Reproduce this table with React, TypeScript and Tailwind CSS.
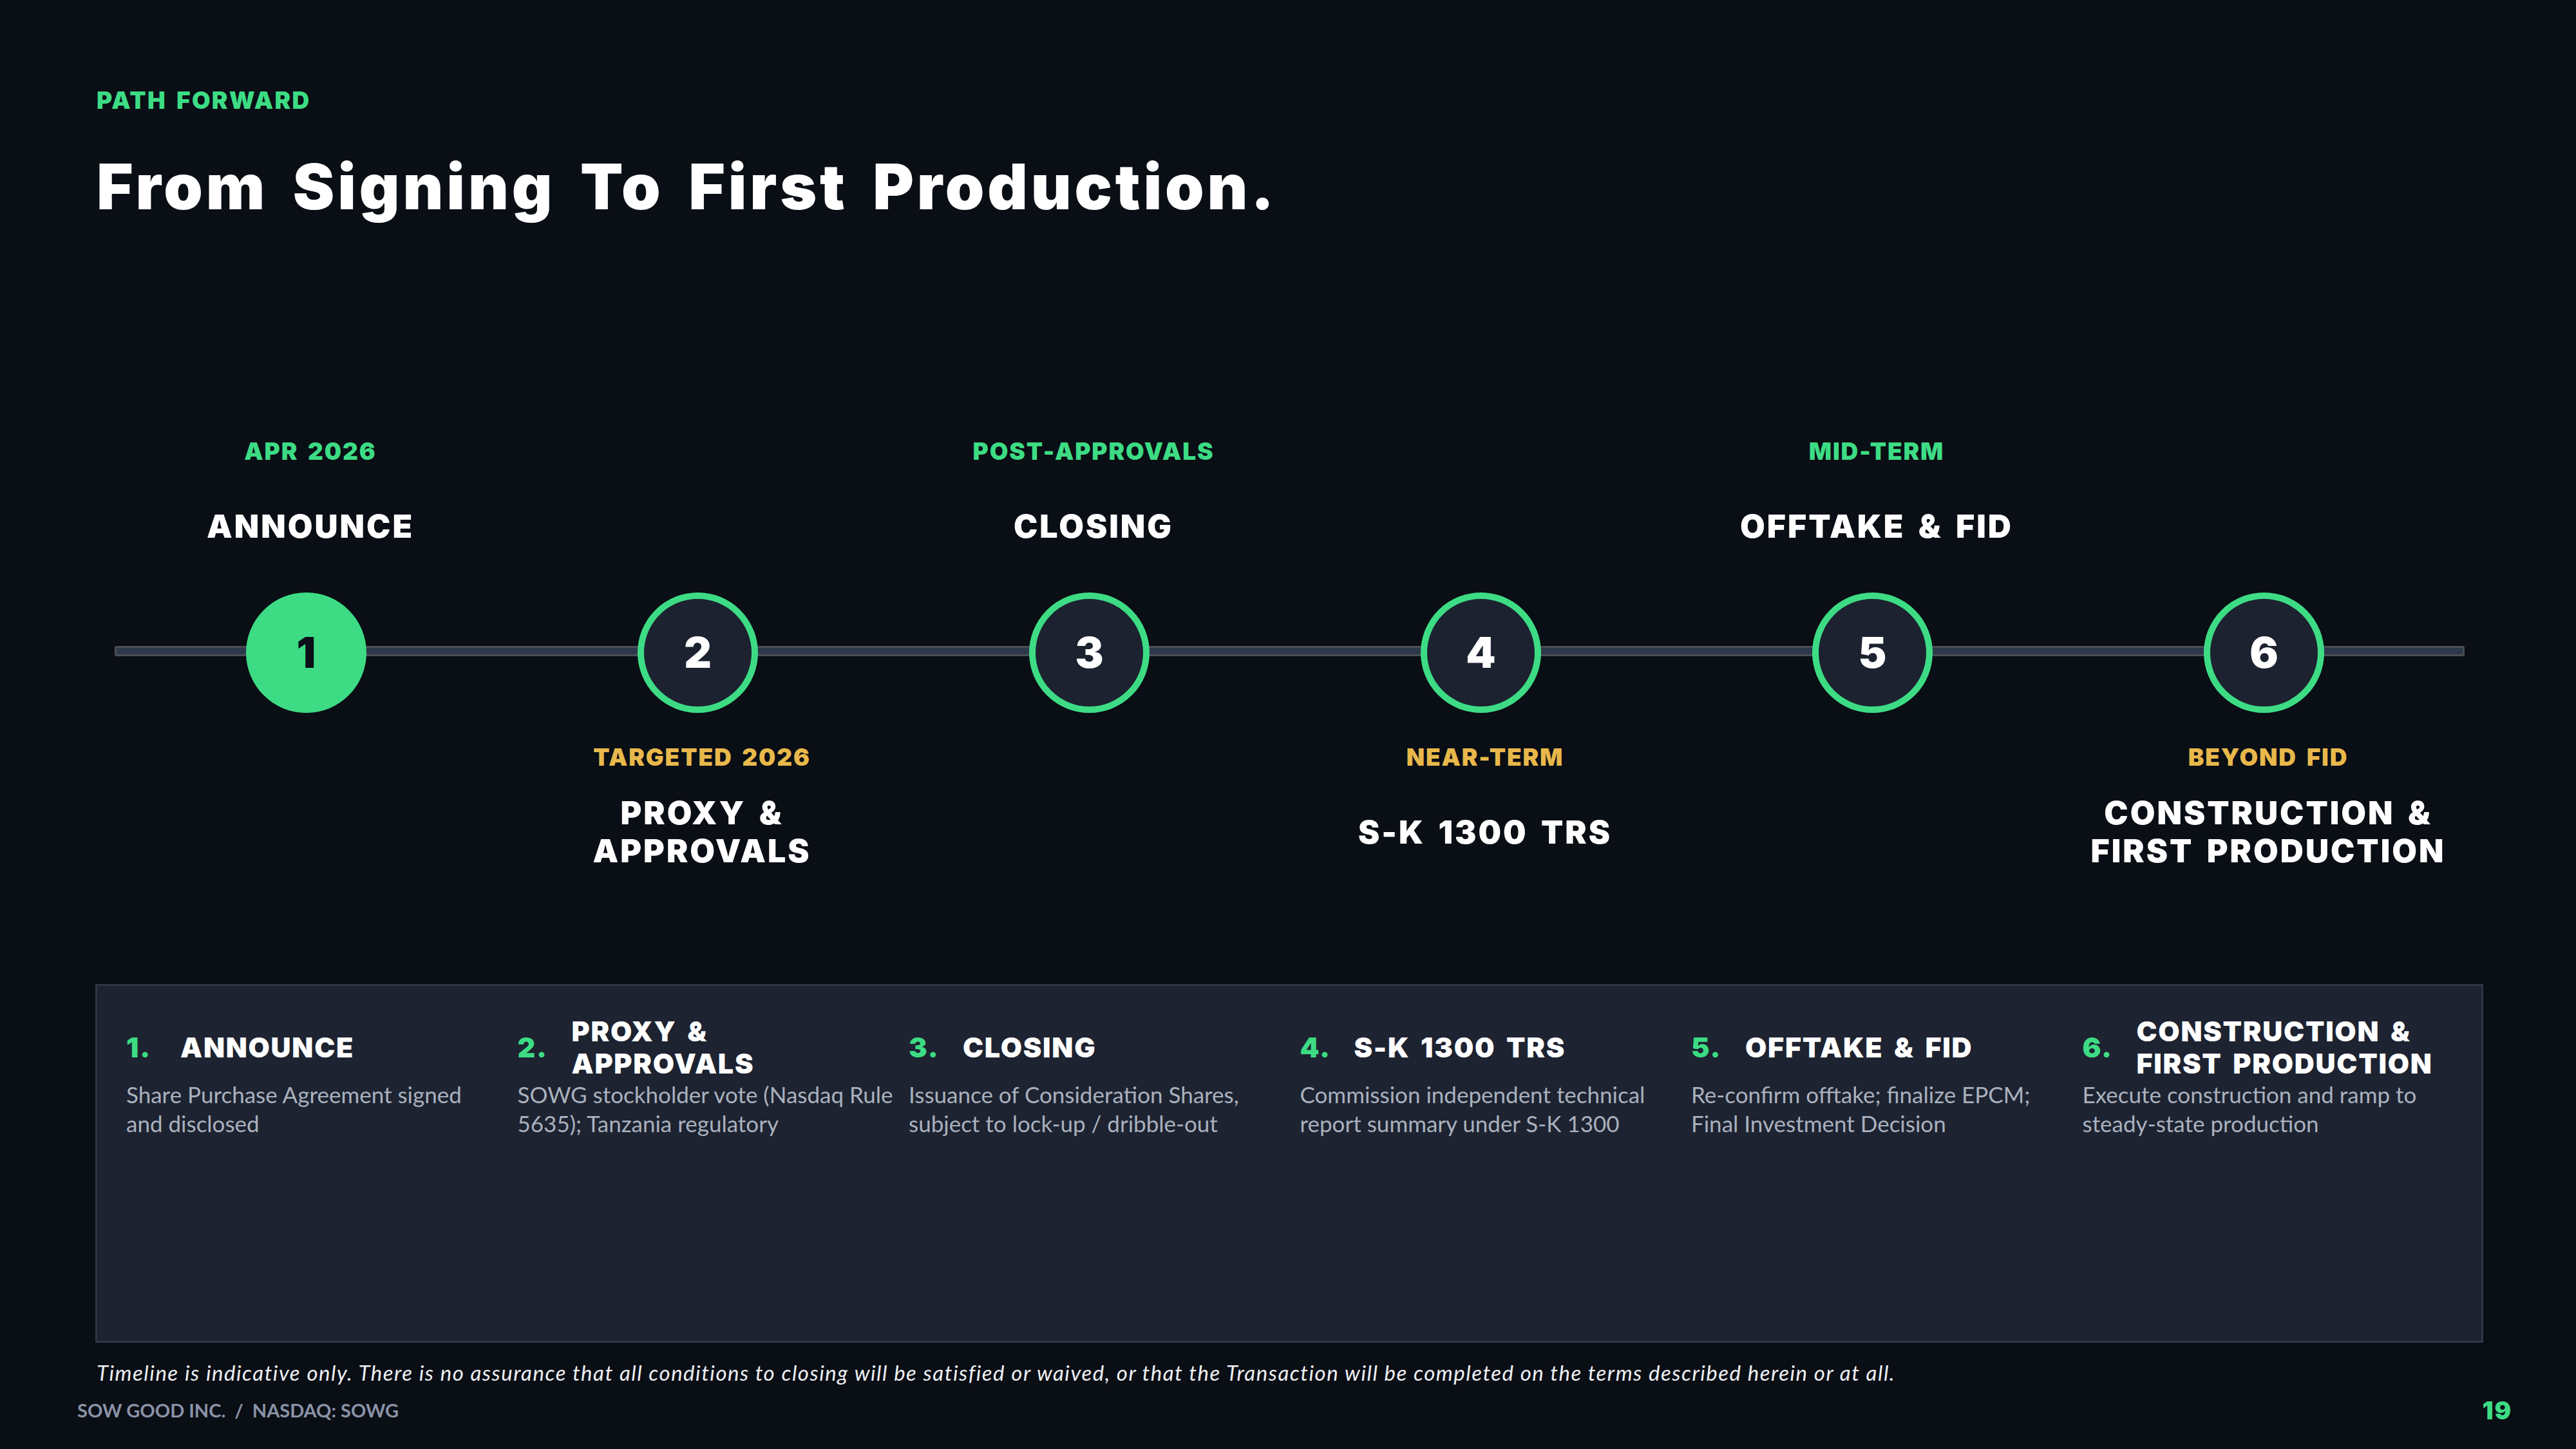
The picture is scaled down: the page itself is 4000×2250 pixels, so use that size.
import React from "react";

type Step = {
  n: number;
  tag: string;
  title: string[];
  top: boolean;
  body: string[];
};

const steps: Step[] = [
  { n: 1, tag: "APR 2026", title: ["ANNOUNCE"], top: true, body: ["Share Purchase Agreement signed", "and disclosed"] },
  { n: 2, tag: "TARGETED 2026", title: ["PROXY &", "APPROVALS"], top: false, body: ["SOWG stockholder vote (Nasdaq Rule", "5635); Tanzania regulatory"] },
  { n: 3, tag: "POST-APPROVALS", title: ["CLOSING"], top: true, body: ["Issuance of Consideration Shares,", "subject to lock-up / dribble-out"] },
  { n: 4, tag: "NEAR-TERM", title: ["S-K 1300 TRS"], top: false, body: ["Commission independent technical", "report summary under S-K 1300"] },
  { n: 5, tag: "MID-TERM", title: ["OFFTAKE & FID"], top: true, body: ["Re-confirm offtake; finalize EPCM;", "Final Investment Decision"] },
  { n: 6, tag: "BEYOND FID", title: ["CONSTRUCTION &", "FIRST PRODUCTION"], top: false, body: ["Execute construction and ramp to", "steady-state production"] },
];

const heavy = { fontFamily: "Inter, 'Liberation Sans', sans-serif" };
const body = { fontFamily: "Lato, 'Open Sans', sans-serif" };

const Label = ({ step }: { step: Step }) => (
  <div className="flex flex-col items-center h-[197px]">
    <div
      className={`h-[44px] text-[37px] leading-[44px] font-black tracking-[0.05em] [word-spacing:0.15em] whitespace-nowrap ${
        step.top ? "text-[#3ddc84]" : "text-[#e8b84b]"
      }`}
    >
      {step.tag}
    </div>
    <div className="mt-[35px] h-[118px] flex flex-col items-center justify-center text-center text-white text-[50px] leading-[59px] font-black tracking-[0.06em] [word-spacing:0.15em]">
      {step.title.map((t) => (
        <span key={t} className="whitespace-nowrap">
          {t}
        </span>
      ))}
    </div>
  </div>
);

const Milestone = ({ step }: { step: Step }) => (
  <div className="flex flex-col items-center">
    {step.top ? <Label step={step} /> : <div className="h-[197px]" />}
    <div
      className={`mt-[44px] mr-[13px] w-[187px] h-[187px] rounded-full flex items-center justify-center text-[66px] font-black ${
        step.n === 1
          ? "bg-[#3ddc84] text-[#0b0f17]"
          : "bg-[#1c2230] border-[10px] border-[#3ddc84] text-white"
      }`}
    >
      {step.n}
    </div>
    <div className="mt-[47px]">{step.top ? <div className="h-[197px]" /> : <Label step={step} />}</div>
  </div>
);

const App = () => {
  return (
    <div className="w-[4000px] h-[2250px] bg-[#0a0e15] overflow-hidden flex flex-col" style={heavy}>
      <div className="pl-[150px] pt-[134px]">
        <div className="h-[44px] text-[37px] leading-[44px] font-black tracking-[0.06em] [word-spacing:0.15em] text-[#3ddc84]">
          PATH FORWARD
        </div>
        <h1 className="mt-[54px] h-[116px] text-[97px] leading-[116px] font-black tracking-[0.05em] [word-spacing:0.15em] text-white whitespace-nowrap">
          From Signing To First Production.
        </h1>
      </div>

      <div className="relative ml-[178px] mt-[331px] w-[3648px]">
        <div className="absolute left-0 top-[324px] w-[3649px] h-[16px] rounded-[3px] border-[3px] border-[#4a4d53] bg-[#2c394b]" />
        <div className="relative grid grid-cols-6">
          {steps.map((s) => (
            <Milestone key={s.n} step={s} />
          ))}
        </div>
      </div>

      <div className="ml-[148px] mt-[177px] w-[3708px] h-[557px] bg-[#1d2331] border-[3px] border-[#2f3648] pl-[45px] pr-[12px] pt-[45px]">
        <div className="grid grid-cols-6">
          {steps.map((s) => (
            <div key={s.n} className="flex flex-col">
              <div className="h-[100px] flex items-center">
                <span className="w-[84px] shrink-0 text-[43px] leading-[50px] font-black tracking-[0.04em] text-[#3ddc84]">
                  {s.n}.
                </span>
                <div className="flex flex-col text-[43px] leading-[50px] font-black tracking-[0.04em] [word-spacing:0.15em] text-white">
                  {s.title.map((t) => (
                    <span key={t} className="whitespace-nowrap">
                      {t}
                    </span>
                  ))}
                </div>
              </div>
              <div className="mt-[1px] text-[35px] leading-[45px] text-[#aab1be]" style={body}>
                {s.body.map((t) => (
                  <div key={t} className="whitespace-nowrap">
                    {t}
                  </div>
                ))}
              </div>
            </div>
          ))}
        </div>
      </div>

      <div
        className="mt-[26px] pl-[150px] h-[40px] text-[33px] leading-[40px] italic tracking-[1.5px] text-[#eef0f3] whitespace-nowrap"
        style={body}
      >
        Timeline is indicative only. There is no assurance that all conditions to closing will be satisfied or waived, or that the Transaction will be completed on the terms described herein or at all.
      </div>

      <div className="mt-[19px] pl-[120px] pr-[99px] h-[40px] flex items-center justify-between">
        <div className="text-[29px] leading-[40px] font-bold text-[#8a93a8] whitespace-nowrap" style={body}>
          SOW GOOD INC.<span className="mx-[14px]">/</span>NASDAQ: SOWG
        </div>
        <div className="text-[38px] leading-[40px] font-black tracking-[0.05em] text-[#3ddc84]">19</div>
      </div>
    </div>
  );
};

export default App;
